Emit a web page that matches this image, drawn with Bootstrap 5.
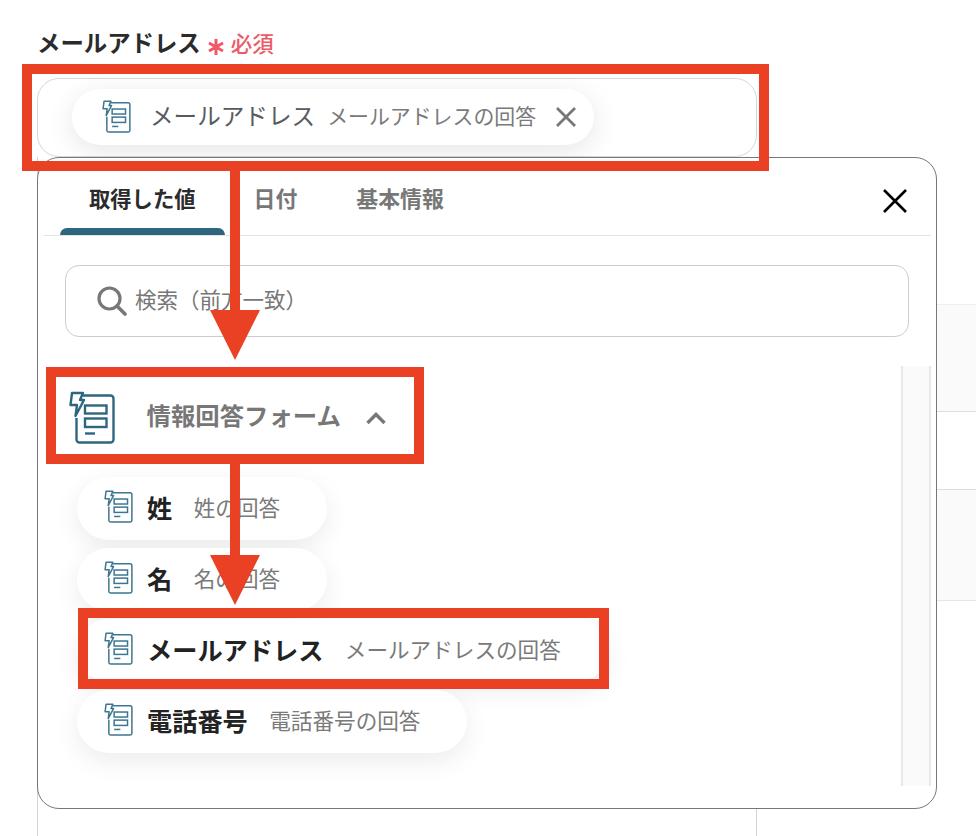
<!doctype html>
<html lang="ja">
<head>
<meta charset="utf-8">
<title>メールアドレス</title>
<link href="https://cdn.jsdelivr.net/npm/bootstrap@5.3.0/dist/css/bootstrap.min.css" rel="stylesheet">
<style>
html,body{background:#fff;}
body{font-family:"Noto Sans CJK JP","Liberation Sans",sans-serif;color:#222;overflow:hidden;}
.stage{position:relative;width:976px;height:836px;overflow:hidden;padding:25px 0 0 37px;}
.lbl-row{height:35px;line-height:35px;}
.lbl-main{font-size:23.4px;font-weight:700;color:#2b2b2b;}
.lbl-req{font-size:21.5px;color:#ee5a68;font-weight:500;}
.req-star{margin:8px 6px 0 6px;}
.field{width:720px;height:79px;margin-top:18px;border:1px solid #d3d7de;border-radius:22px;padding:10px 0 0 34px;background:#fff;}
.chip{height:56px;width:522px;border-radius:28px;padding:0 0 2px 30px;background:#fff;box-shadow:0 6px 28px rgba(0,0,0,.10);}
.chip-name{font-size:23.6px;color:#555b60;margin-left:19px;white-space:nowrap;}
.chip-sub{font-size:20.9px;color:#7a7a7a;margin-left:12px;white-space:nowrap;}
.chip-x{margin-left:18px;margin-top:1px;}
.under{height:679px;border-left:1px solid #ccd6dd;}
.under-left{width:719px;border-right:1px solid #ccd6dd;flex:none;}
.under-right{flex:1;padding-top:147px;}
.u-row{border-bottom:1px solid #dedede;}
.u-a{height:108px;background:#fafafa;border-top:1px solid #eee;}
.u-b{height:78px;}
.u-c{height:111px;background:#fafafa;border-bottom-color:#e6e6e6;}
.popup{position:absolute;left:37px;top:157px;width:900px;height:652px;border:1px solid #777;border-radius:22px;background:#fff;padding:0 5px 0 6px;z-index:2;}
.tabbar{height:78px;border-bottom:1px solid #e4e4e4;padding-left:16px;}
.tab-item{padding:0 29px;height:77px;line-height:80px;font-size:21.3px;color:#777;font-weight:700;white-space:nowrap;position:relative;}
.tab-item.is-on{color:#2b2b2b;}
.tab-item.tab-wide{font-size:21.9px;padding-right:30px;}
.tab-item.is-on::after{content:"";position:absolute;left:0;right:0;bottom:0;height:7px;background:#2e6680;border-radius:8px 8px 0 0;}
.tab-x{margin:30px 23px 0 auto;}
.searchbox{margin:29px 22px 0 21px;height:72px;border:1px solid #ccc;border-radius:14px;padding-left:31px;color:#777;font-size:21.5px;}
.searchbox span{margin-left:8px;margin-bottom:3px;}
.listarea{margin-top:29px;height:420px;}
.listcol{flex:1;min-width:0;}
.scroller{width:30px;flex:none;background:#fafafa;border-left:2px solid #e8e8e8;border-right:2px solid #e8e8e8;}
.grp{padding:25px 0 0 24.500px;height:111px;}
.grp-name{font-size:24.4px;font-weight:700;color:#777;margin-left:32px;white-space:nowrap;margin-top:6px;}
.grp-chev{margin-left:24px;margin-top:19px;}
.pill{height:63px;border-radius:32px;padding:0 47px 2px 27px;background:#fff;box-shadow:0 8px 26px rgba(0,0,0,.08);margin:0 0 8px 33px;width:max-content;}
.pill svg{margin-bottom:2px;}
.pill-name{font-size:25.2px;font-weight:700;color:#222;margin-left:14px;white-space:nowrap;}
.pill-sub{font-size:21.6px;color:#7a7a7a;margin-left:21.500px;white-space:nowrap;}
.marks{position:absolute;inset:0;z-index:3;pointer-events:none;}
</style>
</head>
<body>
<svg width="0" height="0" class="position-absolute">
  <symbol id="formico" viewBox="0 0 46 53">
    <path d="M14 4.500H41.500a3 3 0 0 1 3 3V48.500a3 3 0 0 1-3 3H10.500a3 3 0 0 1-3-3V27" fill="none" stroke="currentColor" stroke-width="2.4"/>
    <path d="M3 2H14L11 9H15L6.500 25L8 14H1.500Z" fill="#fff" stroke="currentColor" stroke-width="2.4" stroke-linejoin="round"/>
    <rect x="16" y="14.500" width="21.500" height="8" fill="none" stroke="currentColor" stroke-width="2.4"/>
    <rect x="16" y="27.500" width="21.500" height="8.500" fill="none" stroke="currentColor" stroke-width="2.4"/>
    <path d="M16 42.500H26" stroke="currentColor" stroke-width="2.4"/>
  </symbol>
</svg>
<div class="stage">
  <div class="lbl-row d-flex align-items-center">
    <span class="lbl-main">メールアドレス</span>
    <svg class="req-star" width="18" height="18" viewBox="0 0 18 18"><path d="M9 1V17M2 5L16 13M16 5L2 13" stroke="#ee5a68" stroke-width="3"/></svg>
    <span class="lbl-req">必須</span>
  </div>
  <div class="field">
    <div class="chip d-flex align-items-center">
      <svg width="29" height="33" style="color:#3d7690"><use href="#formico"/></svg>
      <span class="chip-name">メールアドレス</span>
      <span class="chip-sub">メールアドレスの回答</span>
      <svg class="chip-x" width="24" height="24" viewBox="0 0 24 24"><path d="M3 3L21 21M21 3L3 21" stroke="#777" stroke-width="2.8"/></svg>
    </div>
  </div>
  <div class="under d-flex">
    <div class="under-left"></div>
    <div class="under-right">
      <div class="u-row u-a"></div>
      <div class="u-row u-b"></div>
      <div class="u-row u-c"></div>
    </div>
  </div>

  <div class="popup">
    <div class="tabbar d-flex">
      <div class="tab-item is-on">取得した値</div>
      <div class="tab-item tab-wide">日付</div>
      <div class="tab-item tab-wide">基本情報</div>
      <svg class="tab-x" width="26" height="26" viewBox="0 0 26 26"><path d="M2 2L24 24M24 2L2 24" stroke="#000" stroke-width="2.6"/></svg>
    </div>
    <div class="searchbox d-flex align-items-center">
      <svg width="30" height="30" viewBox="0 0 30 30"><circle cx="12.500" cy="12.500" r="10.500" fill="none" stroke="#777" stroke-width="3.2"/><path d="M20 20L28 28" stroke="#777" stroke-width="3.600" stroke-linecap="round"/></svg>
      <span>検索（前方一致）</span>
    </div>
    <div class="listarea d-flex">
      <div class="listcol">
        <div class="grp d-flex align-items-start">
          <svg width="46" height="53" style="color:#2e6680"><use href="#formico"/></svg>
          <span class="grp-name">情報回答フォーム</span>
          <svg class="grp-chev" width="22" height="16" viewBox="0 0 22 16"><path d="M2.500 13L11 4.500L19.500 13" fill="none" stroke="#777" stroke-width="3.400"/></svg>
        </div>
        <div class="pill d-flex align-items-center">
          <svg width="29" height="33" style="color:#3d7690"><use href="#formico"/></svg>
          <span class="pill-name">姓</span><span class="pill-sub">姓の回答</span>
        </div>
        <div class="pill d-flex align-items-center">
          <svg width="29" height="33" style="color:#3d7690"><use href="#formico"/></svg>
          <span class="pill-name">名</span><span class="pill-sub">名の回答</span>
        </div>
        <div class="pill d-flex align-items-center">
          <svg width="29" height="33" style="color:#3d7690"><use href="#formico"/></svg>
          <span class="pill-name">メールアドレス</span><span class="pill-sub">メールアドレスの回答</span>
        </div>
        <div class="pill d-flex align-items-center">
          <svg width="29" height="33" style="color:#3d7690"><use href="#formico"/></svg>
          <span class="pill-name">電話番号</span><span class="pill-sub">電話番号の回答</span>
        </div>
      </div>
      <div class="scroller"></div>
    </div>
  </div>

  <svg class="marks" width="976" height="836" viewBox="0 0 976 836">
    <g fill="none" stroke="#ea4125" stroke-width="10">
      <rect x="27" y="69" width="737" height="97"/>
      <rect x="51" y="372" width="368" height="87"/>
      <rect x="83" y="613" width="521" height="71"/>
    </g>
    <g fill="#ea4125">
      <rect x="230" y="171" width="10" height="140"/>
      <polygon points="210,310 260,310 235,360"/>
      <rect x="230" y="464" width="10" height="92"/>
      <polygon points="210,555 260,555 235,605"/>
    </g>
  </svg>
</div>
<script src="https://cdn.jsdelivr.net/npm/bootstrap@5.3.0/dist/js/bootstrap.bundle.min.js"></script>
</body>
</html>
